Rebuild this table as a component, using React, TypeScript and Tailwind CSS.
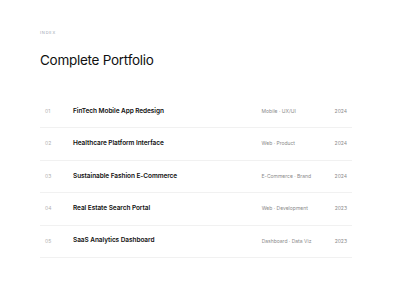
const projects = [
  { id: "01", title: "FinTech Mobile App Redesign", category: "Mobile · UX/UI", year: "2024" },
  { id: "02", title: "Healthcare Platform Interface", category: "Web · Product", year: "2024" },
  { id: "03", title: "Sustainable Fashion E-Commerce", category: "E-Commerce · Brand", year: "2024" },
  { id: "04", title: "Real Estate Search Portal", category: "Web · Development", year: "2023" },
  { id: "05", title: "SaaS Analytics Dashboard", category: "Dashboard · Data Viz", year: "2023" },
];

export default function App() {
  return (
    <div className="min-h-screen bg-white font-['Inter',sans-serif] text-[#111]">
      <div className="w-[312px] pl-10 pt-[30px] box-content">
        <p className="text-[4px] leading-[6px] tracking-[0.2em] uppercase text-[#9ca3af]">Index</p>
        <h1 className="mt-[15px] text-[13.5px] leading-[18px] font-normal tracking-[-0.02em]">Complete Portfolio</h1>

        {/* project list */}
        <div className="mt-[27px] flex flex-col">
          {projects.map((p) => (
            <div key={p.id} className="flex h-[32.4px] items-center border-b border-[#f1f1f1] px-[5px]">
              <span className="w-[28px] text-[5px] text-[#b0b0b0]">{p.id}</span>
              <span className="flex-1 text-[6.5px] font-semibold tracking-[-0.01em]">{p.title}</span>
              <span className="w-[73px] text-[5px] text-[#8a8a8a]">{p.category}</span>
              <span className="text-[5px] text-[#8a8a8a]">{p.year}</span>
            </div>
          ))}
        </div>
      </div>
    </div>
  );
}
